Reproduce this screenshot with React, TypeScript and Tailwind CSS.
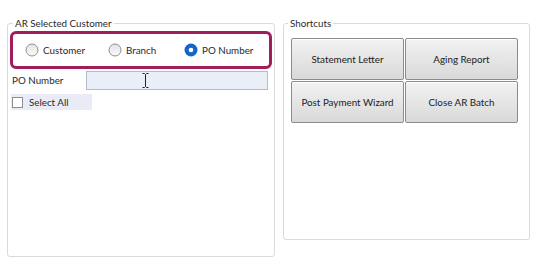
import { useState } from 'react';

const FONT = "font-['Lato','Noto_Sans',sans-serif]";

type Choice = 'customer' | 'branch' | 'po';

// ラジオボタン（Windows風）
function Radio({ checked, label, onClick, className }: { checked: boolean; label: string; onClick: () => void; className?: string }) {
  return (
    <button type="button" onClick={onClick} className={`flex items-center gap-[4px] whitespace-nowrap ${className ?? ''}`}>
      <svg width="14" height="14" viewBox="0 0 14 14" className="shrink-0">
        {checked ? (
          <>
            <circle cx="7" cy="7" r="6.5" fill="#1565c8" />
            <circle cx="7" cy="7" r="2.3" fill="#fff" />
          </>
        ) : (
          <>
            <defs>
              <linearGradient id="rg" x1="0" y1="0" x2="0" y2="1">
                <stop offset="0" stopColor="#e3e3e3" />
                <stop offset="1" stopColor="#fafafa" />
              </linearGradient>
            </defs>
            <circle cx="7" cy="7" r="6" fill="url(#rg)" stroke="#8e8e8e" strokeWidth="1" />
          </>
        )}
      </svg>
      <span className="text-[9.8px] leading-[14px] text-[#2a2a2a]">{label}</span>
    </button>
  );
}

function ShortcutButton({ label }: { label: string }) {
  return (
    <button
      type="button"
      className="h-[42px] rounded-[2px] border border-[#8c8c8c] bg-gradient-to-b from-[#f2f2f2] to-[#d9d9d9] text-[9.8px] text-[#222] whitespace-nowrap shadow-[inset_0_1px_0_#fff]"
    >
      {label}
    </button>
  );
}

export default function App() {
  const [choice, setChoice] = useState<Choice>('po');
  const [selectAll, setSelectAll] = useState(false);

  return (
    <div className={`w-[546px] h-[264px] bg-white flex items-start pt-[16px] pl-[7px] gap-[8px] ${FONT}`}>
      {/* AR Selected Customer */}
      <fieldset className="w-[268px] min-w-0 shrink-0 h-[241px] border border-[#dadada] rounded-[3px] px-[2px]">
        <legend className="ml-[3px] px-[2px] text-[9.8px] leading-[14px] text-[#2a2a2a]">AR Selected Customer</legend>
        <div className="mt-[1px] h-[38px] border-[3px] border-[#a11d5c] rounded-[6px] flex items-center pl-[12px]">
          <Radio className="w-[83px]" checked={choice === 'customer'} label="Customer" onClick={() => setChoice('customer')} />
          <Radio className="w-[76px]" checked={choice === 'branch'} label="Branch" onClick={() => setChoice('branch')} />
          <Radio checked={choice === 'po'} label="PO Number" onClick={() => setChoice('po')} />
        </div>
        <div className="mt-[2px] flex items-center h-[19px]">
          <span className="ml-[2px] w-[74px] text-[9.8px] text-[#2a2a2a] whitespace-nowrap">PO Number</span>
          <div className="w-[182px] h-[19px] border border-[#b4bccb] bg-[#eaeef6] flex items-center pl-[55px]">
            <svg width="7" height="15" viewBox="0 0 7 15">
              <path d="M0.5 0.5h2l1 1 1-1h2M3.5 1.5v12M0.5 14.5h2l1-1 1 1h2" fill="none" stroke="#222" strokeWidth="1" />
            </svg>
          </div>
        </div>
        <button
          type="button"
          onClick={() => setSelectAll(!selectAll)}
          className="mt-[4px] ml-[1px] w-[81px] h-[16px] bg-[#e9ecf6] flex items-center gap-[6px] pl-[1px]"
        >
          <span className="w-[11px] h-[11px] border border-[#8e8e8e] bg-white flex items-center justify-center text-[9px] leading-none">
            {selectAll ? '✓' : ''}
          </span>
          <span className="text-[9.8px] text-[#2a2a2a]">Select All</span>
        </button>
      </fieldset>

      {/* Shortcuts */}
      <fieldset className="w-[247px] min-w-0 shrink-0 h-[224px] border border-[#dadada] rounded-[3px]">
        <legend className="ml-[4px] px-[2px] text-[9.8px] leading-[14px] text-[#2a2a2a]">Shortcuts</legend>
        <div className="mt-[8px] ml-[7px] grid grid-cols-[113px_113px] gap-[1px]">
          <ShortcutButton label="Statement Letter" />
          <ShortcutButton label="Aging Report" />
          <ShortcutButton label="Post Payment Wizard" />
          <ShortcutButton label="Close AR Batch" />
        </div>
      </fieldset>
    </div>
  );
}
